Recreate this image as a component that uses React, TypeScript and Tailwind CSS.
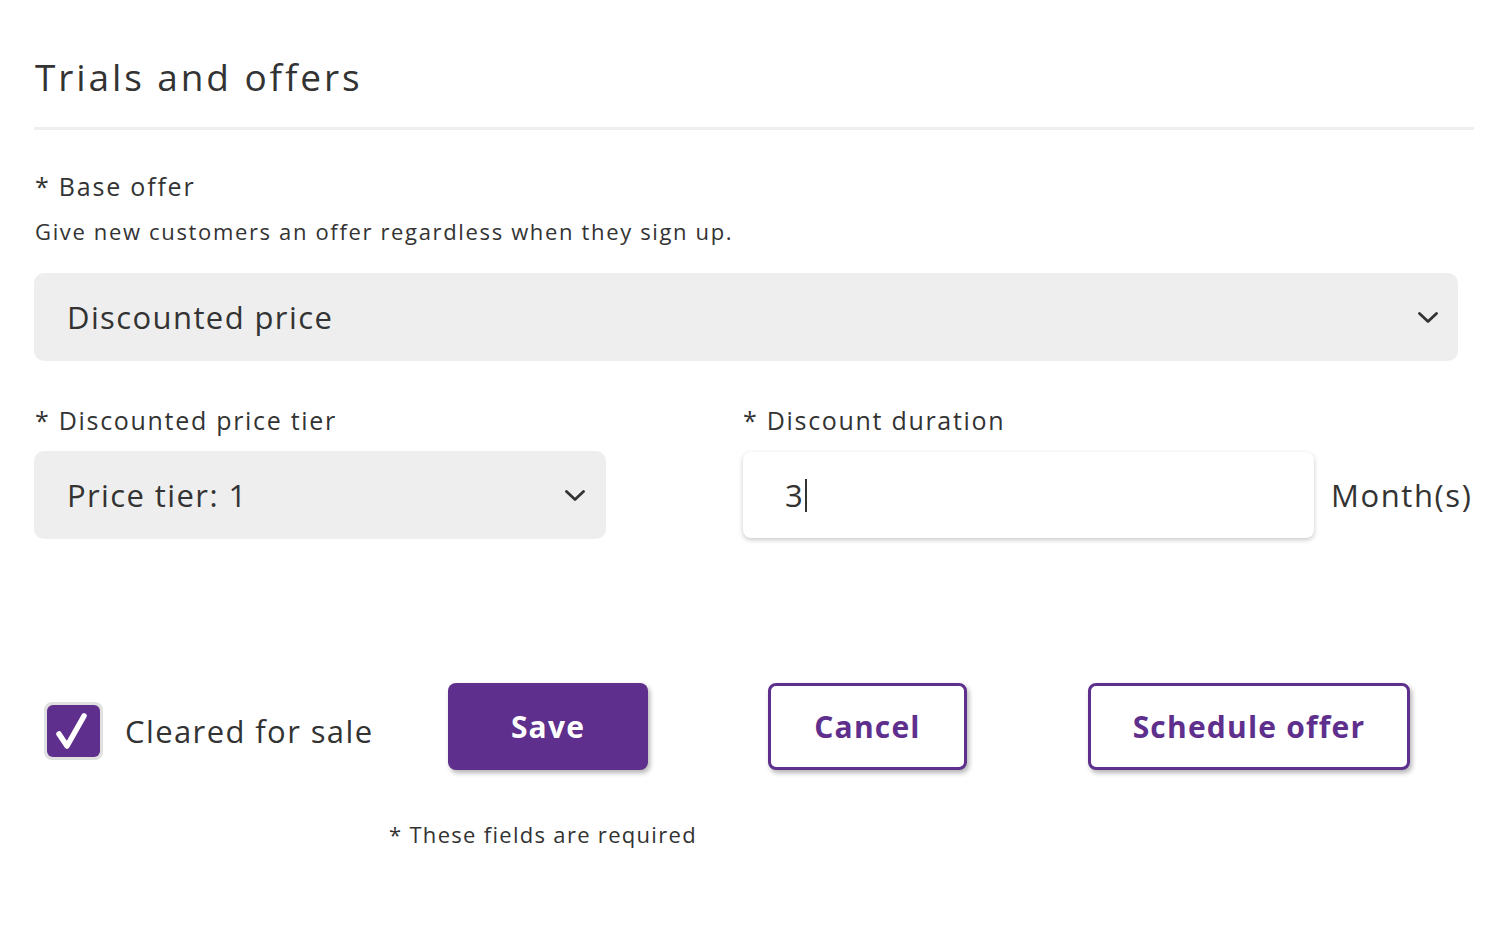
import { useState } from "react";

const Chevron = () => (
  <svg viewBox="0 0 20 11" className="h-[11px] w-[20px]" fill="none" stroke="#333" strokeWidth="2.8" strokeLinecap="round" strokeLinejoin="round">
    <path d="M1.5 1.5L10 9.5l8.5-8" />
  </svg>
);

export default function App() {
  const [cleared, setCleared] = useState(true);

  return (
    <div className="min-h-screen bg-white pl-[34px] pr-[24px] pt-[51px] text-[#333] font-['Open_Sans',sans-serif]">
      <h1 className="pl-[1px] text-[37px] leading-[52px] tracking-[2.9px]">Trials and offers</h1>
      <div className="mt-[24px] h-[3px] bg-[#eeeeee]" />

      <div className="mt-[39px] pl-[1px] text-[25px] leading-[34px] tracking-[1.8px]">* Base offer</div>
      <div className="mt-[13px] pl-[1px] text-[22px] leading-[30px] tracking-[1.65px]">
        Give new customers an offer regardless when they sign up.
      </div>

      <div className="mt-[27px] flex h-[88px] w-[1424px] items-center justify-between rounded-[10px] bg-[#eeeeee] pl-[33px] pr-[20px]">
        <span className="text-[31px] leading-[40px] tracking-[1.4px]">Discounted price</span>
        <Chevron />
      </div>

      <div className="mt-[42px] flex">
        <div className="w-[709px]">
          <div className="pl-[1px] text-[25px] leading-[34px] tracking-[1.7px]">* Discounted price tier</div>
          <div className="mt-[14px] flex h-[88px] w-[572px] items-center justify-between rounded-[10px] bg-[#eeeeee] pl-[33px] pr-[21px]">
            <span className="text-[31px] leading-[40px] tracking-[1.4px]">Price tier: 1</span>
            <Chevron />
          </div>
        </div>
        <div>
          <div className="text-[25px] leading-[34px] tracking-[1.7px]">* Discount duration</div>
          <div className="mt-[15px] flex items-center">
            <div className="flex h-[86px] w-[571px] items-center rounded-[8px] bg-white pl-[42px] shadow-[0_2px_5px_rgba(0,0,0,0.22)]">
              <span className="text-[31px] leading-[40px]">3</span>
              <span className="ml-[2px] h-[33px] w-[2px] bg-[#333]" />
            </div>
            <span className="ml-[17px] text-[31px] leading-[40px] tracking-[1.6px]">Month(s)</span>
          </div>
        </div>
      </div>

      <div className="mt-[144px] flex items-start">
        <button
          onClick={() => setCleared(!cleared)}
          className="ml-[10px] mt-[19px] h-[58px] w-[59px] rounded-[8px] border-[3px] border-[#e0e0e0] bg-[#e0e0e0]"
        >
          <div className="h-full w-full rounded-[6px] bg-[#5e2f8c]">
            {cleared && (
              <svg viewBox="0 0 53 52" className="h-full w-full" fill="none" stroke="white" strokeWidth="5.5" strokeLinecap="round" strokeLinejoin="round">
                <path d="M12 29l8 12L37 11" />
              </svg>
            )}
          </div>
        </button>
        <span className="ml-[22px] mt-[30px] w-[323px] text-[31px] leading-[36px] tracking-[1.4px]">Cleared for sale</span>
        <button className="h-[87px] w-[200px] rounded-[8px] bg-[#5e2f8c] text-[30px] font-bold tracking-[1.2px] text-white shadow-[2px_3px_5px_rgba(0,0,0,0.3)]">
          Save
        </button>
        <button className="ml-[120px] h-[87px] w-[199px] rounded-[8px] border-[3px] border-[#5e2f8c] bg-white text-[30px] font-bold tracking-[1.2px] text-[#5e2f8c] shadow-[2px_3px_5px_rgba(0,0,0,0.3)]">
          Cancel
        </button>
        <button className="ml-[121px] h-[87px] w-[322px] rounded-[8px] border-[3px] border-[#5e2f8c] bg-white text-[30px] font-bold tracking-[1.2px] text-[#5e2f8c] shadow-[2px_3px_5px_rgba(0,0,0,0.3)]">
          Schedule offer
        </button>
      </div>

      <div className="mt-[49px] pl-[355px] text-[22px] leading-[30px] tracking-[1.3px]">* These fields are required</div>
    </div>
  );
}
